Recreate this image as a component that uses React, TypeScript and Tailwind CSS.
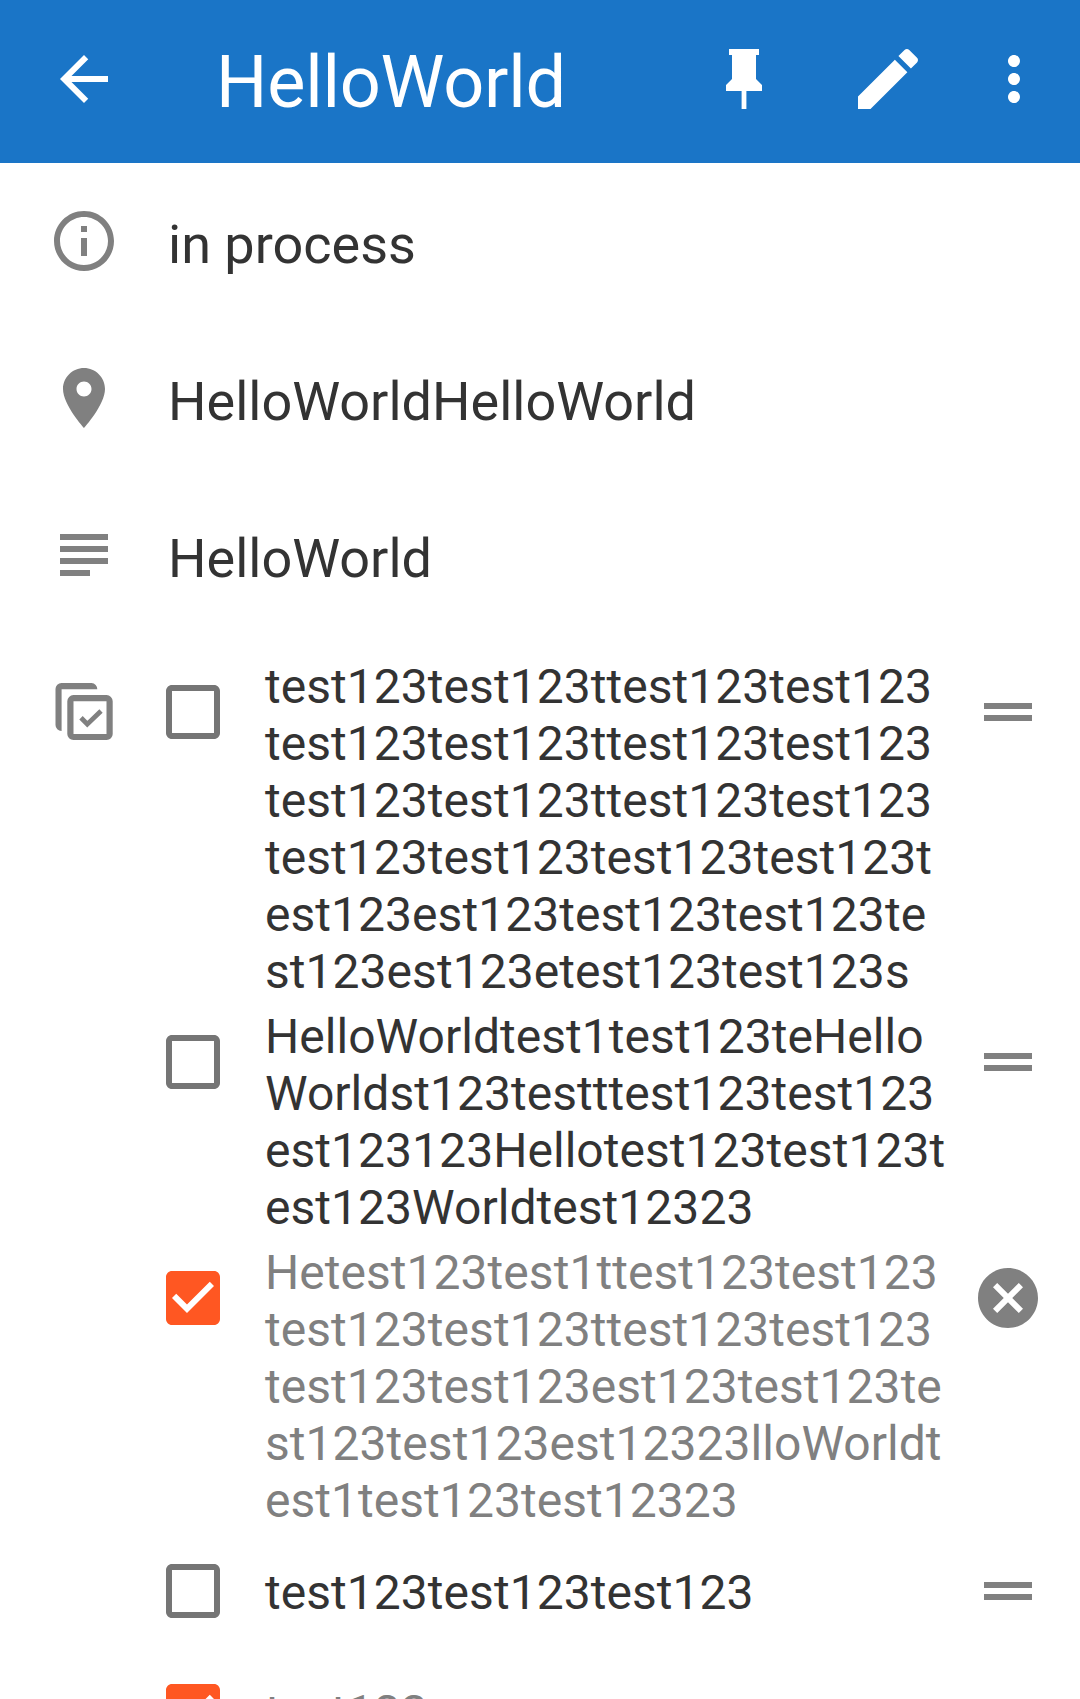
import React from "react";

type Item = { lines: string[]; done?: boolean; action?: boolean };

const items: Item[] = [
  {
    lines: [
      "test123test123ttest123test123",
      "test123test123ttest123test123",
      "test123test123ttest123test123",
      "test123test123test123test123t",
      "est123est123test123test123te",
      "st123est123etest123test123s",
    ],
  },
  {
    lines: [
      "HelloWorldtest1test123teHello",
      "Worldst123testttest123test123",
      "est123123Hellotest123test123t",
      "est123Worldtest12323",
    ],
  },
  {
    done: true,
    lines: [
      "Hetest123test1ttest123test123",
      "test123test123ttest123test123",
      "test123test123est123test123te",
      "st123test123est12323lloWorldt",
      "est1test123test12323",
    ],
  },
  { lines: ["test123test123test123"] },
  { done: true, action: false, lines: ["test123"] },
];

function Icon({ d, className = "size-[72px]" }: { d: string; className?: string }) {
  return (
    <svg viewBox="0 0 24 24" fill="currentColor" className={`shrink-0 ${className}`}>
      <path d={d} />
    </svg>
  );
}

const BACK = "M20 11H7.83l5.59-5.59L12 4l-8 8 8 8 1.41-1.41L7.83 13H20v-2z";
const PIN = "M16 12V4h1V2H7v2h1v8l-2 2v2h5.2v6h1.6v-6H18v-2l-2-2z";
const EDIT =
  "M3 17.25V21h3.75L17.81 9.94l-3.75-3.75L3 17.25zM20.71 7.04c.39-.39.39-1.02 0-1.41l-2.34-2.34c-.39-.39-1.02-.39-1.41 0l-1.83 1.83 3.75 3.75 1.83-1.83z";
const MORE =
  "M12 8c1.1 0 2-.9 2-2s-.9-2-2-2-2 .9-2 2 .9 2 2 2zm0 2c-1.1 0-2 .9-2 2s.9 2 2 2 2-.9 2-2-.9-2-2-2zm0 6c-1.1 0-2 .9-2 2s.9 2 2 2 2-.9 2-2-.9-2-2-2z";
const INFO =
  "M11 17h2v-6h-2v6zm1-15C6.48 2 2 6.48 2 12s4.48 10 10 10 10-4.48 10-10S17.52 2 12 2zm0 18c-4.41 0-8-3.59-8-8s3.59-8 8-8 8 3.59 8 8-3.59 8-8 8zM11 9h2V7h-2v2z";
const PLACE =
  "M12 2C8.13 2 5 5.13 5 9c0 5.25 7 13 7 13s7-7.75 7-13c0-3.87-3.13-7-7-7zm0 9.5c-1.38 0-2.5-1.12-2.5-2.5s1.12-2.5 2.5-2.5 2.5 1.12 2.5 2.5-1.12 2.5-2.5 2.5z";
const SUBJECT = "M4 5h16v2H4zM4 9h16v2H4zM4 13h16v2H4zM4 17h10v2H4z";
const CANCEL =
  "M12 2C6.47 2 2 6.47 2 12s4.47 10 10 10 10-4.47 10-10S17.53 2 12 2zm5 13.59L15.59 17 12 13.41 8.41 17 7 15.59 10.59 12 7 8.41 8.41 7 12 10.59 15.59 7 17 8.41 13.41 12 17 15.59z";
const HANDLE = "M4 9h16v2H4zM4 13h16v2H4z";
const UNCHECKED =
  "M19 5v14H5V5h14m0-2H5c-1.1 0-2 .9-2 2v14c0 1.1.9 2 2 2h14c1.1 0 2-.9 2-2V5c0-1.1-.9-2-2-2z";
const CHECKED =
  "M19 3H5c-1.11 0-2 .9-2 2v14c0 1.1.89 2 2 2h14c1.11 0 2-.9 2-2V5c0-1.1-.89-2-2-2zm-9 14l-5-5 1.41-1.41L10 14.17l7.59-7.59L19 8l-9 9z";

function ChecklistIcon() {
  return (
    <svg viewBox="0 0 72 72" className="mt-6 size-[72px] shrink-0">
      <path
        fill="currentColor"
        d="M13.6 13.2H49.3A6 6 0 0 0 43.5 7H13.5A6 6 0 0 0 7.5 13V49A6 6 0 0 0 13.6 55z"
      />
      <rect x="22.4" y="22.2" width="39.2" height="38.8" rx="3" fill="none" stroke="currentColor" strokeWidth="6.2" />
      <path d="M33 41.8L39.3 48.2L53 35.1" fill="none" stroke="currentColor" strokeWidth="4.8" />
    </svg>
  );
}

function Detail({ icon, text }: { icon: string; text: string }) {
  return (
    <div className="flex h-[157px] items-center">
      <Icon d={icon} />
      <span className="ml-12 pt-2 text-[54px] leading-[64px] text-[#333333]">{text}</span>
    </div>
  );
}

function ChecklistRow({ item }: { item: Item }) {
  return (
    <li className="flex min-h-[120px]">
      <Icon
        d={item.done ? CHECKED : UNCHECKED}
        className={item.done ? "mt-6 size-[72px] text-[#ff5722]" : "mt-6 size-[72px] text-[#757575]"}
      />
      <div
        className={`ml-9 flex grow flex-col justify-center pt-[5.5px] pb-[2.5px] text-[48px] leading-[57px] tracking-[0.04px] whitespace-nowrap ${
          item.done ? "text-[#808080]" : "text-[#333333]"
        }`}
      >
        {item.lines.map((line, i) => (
          <span key={i}>{line}</span>
        ))}
      </div>
      {item.action !== false && <Icon d={item.done ? CANCEL : HANDLE} className="mt-6 mr-9 size-[72px]" />}
    </li>
  );
}

export default function App() {
  return (
    <div className="flex h-[1699px] w-[1080px] flex-col overflow-hidden bg-white font-['Roboto',sans-serif] text-[#808080]">
      <header className="flex h-[163px] shrink-0 items-center bg-[#1a75c7] pb-[5px] pl-12 text-white">
        <Icon d={BACK} />
        <h1 className="ml-24 grow pt-[7px] text-[72px] leading-[84px] tracking-[-0.2px]">HelloWorld</h1>
        <Icon d={PIN} />
        <Icon d={EDIT} className="ml-[68px] size-[80px]" />
        <Icon d={MORE} className="mr-[30px] ml-[50px] size-[72px]" />
      </header>
      <main className="-mt-px shrink-0 pl-12">
        <Detail icon={INFO} text="in process" />
        <Detail icon={PLACE} text="HelloWorldHelloWorld" />
        <Detail icon={SUBJECT} text="HelloWorld" />
        <section className="mt-[19px] flex">
          <ChecklistIcon />
          <ul className="ml-[37px] grow">
            {items.map((item, i) => (
              <ChecklistRow key={i} item={item} />
            ))}
          </ul>
        </section>
      </main>
    </div>
  );
}
